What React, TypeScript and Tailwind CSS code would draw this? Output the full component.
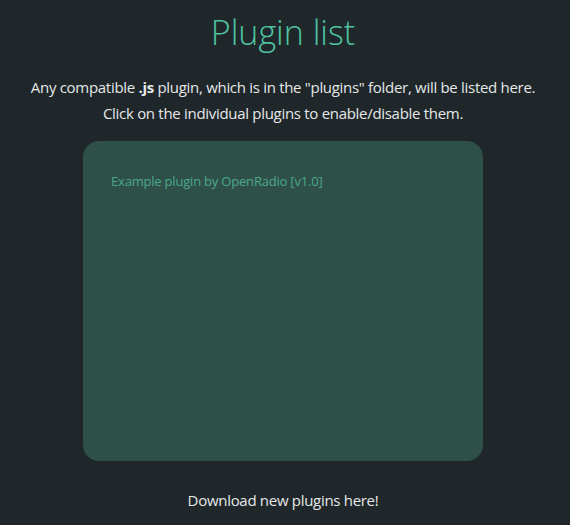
export default function App() {
  return (
    <div
      className="min-h-[525px] w-full bg-[#1f272b] text-[#e6e8e8] flex flex-col items-center pr-[4px]"
      style={{ fontFamily: '"Open Sans", "Noto Sans", sans-serif' }}
    >
      <h1 className="mt-[9px] text-[34px] leading-[46px] font-light text-[#4fc3a1]">
        Plugin list
      </h1>
      <p className="mt-[19px] text-[15px] leading-[26px] text-center tracking-[-0.3px]">
        Any compatible <b>.js</b> plugin, which is in the "plugins" folder, will be listed here.
        <br />
        Click on the individual plugins to enable/disable them.
      </p>
      <div className="mt-[15px] w-[400px] h-[320px] rounded-[16px] bg-[#2f5049] px-[28px] py-[30px]">
        <div className="text-[13px] leading-[20px] text-[#4aa88a] tracking-[-0.2px]">
          Example plugin by OpenRadio [v1.0]
        </div>
      </div>
      <p className="mt-[26px] text-[15px] leading-[26px] tracking-[-0.3px]">
        Download new plugins here!
      </p>
    </div>
  );
}
